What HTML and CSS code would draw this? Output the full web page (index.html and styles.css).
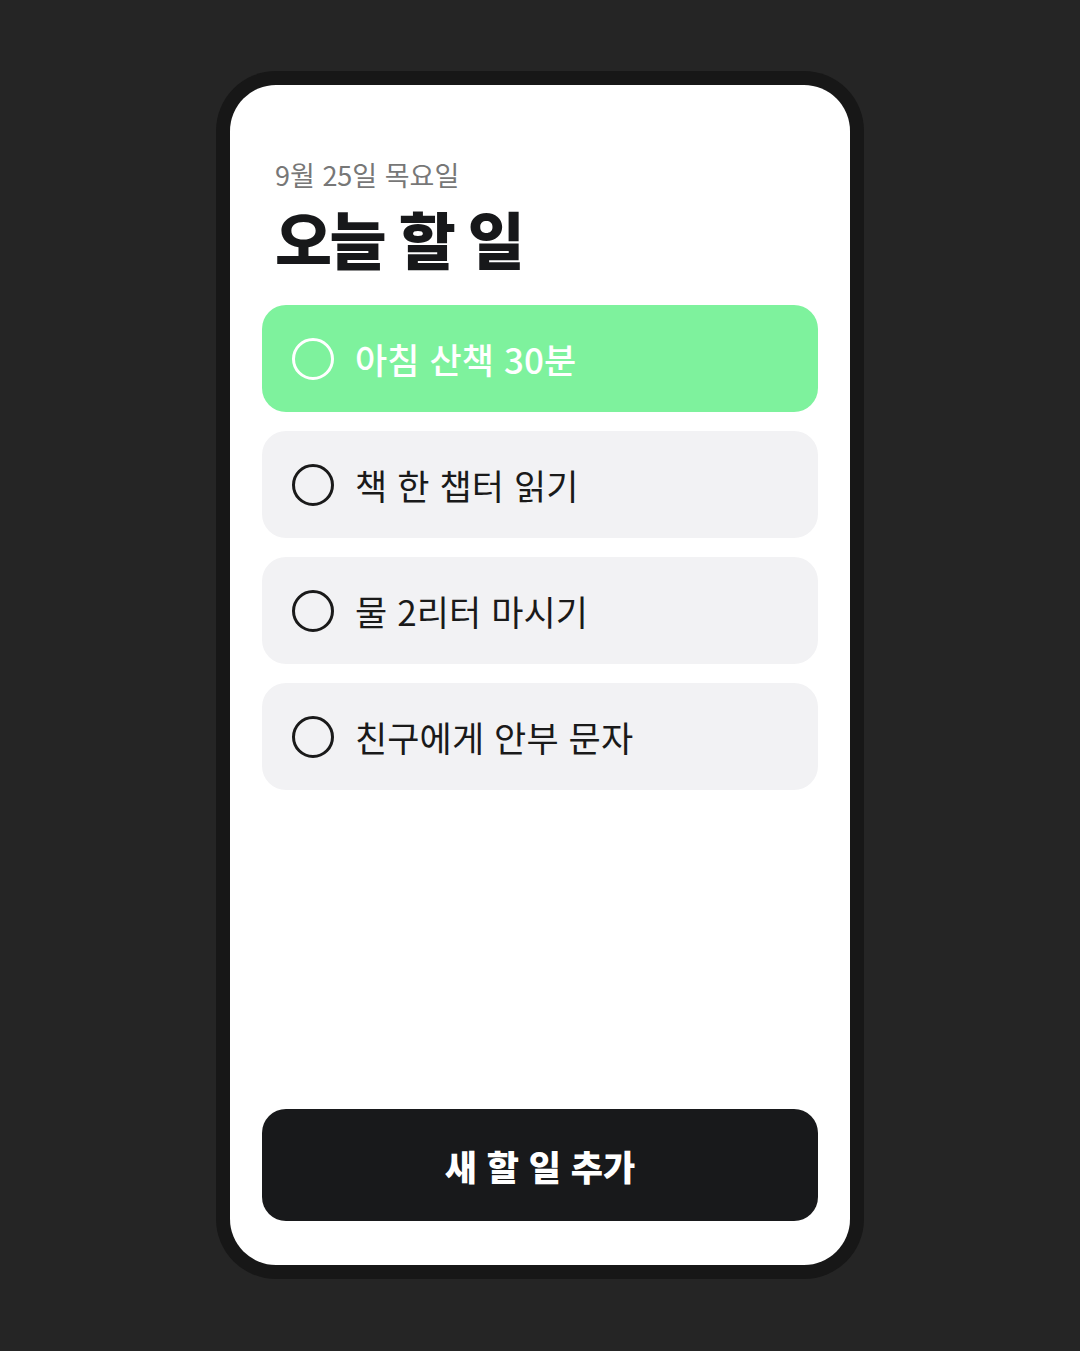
FILE: index.html
```html
<!DOCTYPE html>
<html lang="ko">
<head>
<meta charset="utf-8">
<link rel="stylesheet" href="styles.css">
</head>
<body>
<div class="stage">
  <div class="phone">
    <div class="screen">
      <div class="header">
        <div class="date">9월 25일 목요일</div>
        <h1 class="title">오늘 할 일</h1>
      </div>
      <ul class="tasks">
        <li class="task task-active"><span class="check"></span><span class="label">아침 산책 30분</span></li>
        <li class="task"><span class="check"></span><span class="label">책 한 챕터 읽기</span></li>
        <li class="task"><span class="check"></span><span class="label">물 2리터 마시기</span></li>
        <li class="task"><span class="check"></span><span class="label">친구에게 안부 문자</span></li>
      </ul>
      <div class="spacer"></div>
      <button class="add-btn">새 할 일 추가</button>
    </div>
  </div>
</div>
</body>
</html>
```
FILE: styles.css
```css
* { box-sizing: border-box; }
html, body {
  margin: 0;
  padding: 0;
  background: #252525;
  font-family: "Noto Sans CJK KR", "Noto Sans", sans-serif;
}
.stage {
  width: 1080px;
  height: 1351px;
  display: flex;
  justify-content: center;
  padding-top: 71px;
}
.phone {
  width: 648px;
  height: 1208px;
  background: #171717;
  border-radius: 60px;
  padding: 14px;
}
.screen {
  width: 100%;
  height: 100%;
  background: #ffffff;
  border-radius: 46px;
  padding: 72px 32px 44px;
  display: flex;
  flex-direction: column;
}
.header {
  padding-left: 13px;
}
.date {
  font-size: 27px;
  line-height: 36px;
  color: #777777;
  letter-spacing: 0;
}
.title {
  margin: 7px 0 0;
  font-size: 62px;
  line-height: 76px;
  font-weight: 900;
  color: #17181a;
  letter-spacing: -2.6px;
}
.tasks {
  list-style: none;
  margin: 29px 0 0;
  padding: 0;
  display: flex;
  flex-direction: column;
  gap: 19px;
}
.task {
  height: 107px;
  border-radius: 24px;
  background: #f2f2f4;
  display: flex;
  align-items: center;
  padding-left: 30px;
  gap: 21px;
  color: #1a1a1a;
}
.task-active {
  background: #7ef29d;
  color: #ffffff;
}
.check {
  width: 42px;
  height: 42px;
  border: 3px solid currentColor;
  border-radius: 50%;
  flex: none;
}
.label {
  font-size: 35px;
  font-weight: 400;
  letter-spacing: 0.1px;
  line-height: 1;
}
.task-active .label {
  font-weight: 500;
}
.spacer { flex: 1; }
.add-btn {
  height: 112px;
  border: none;
  border-radius: 24px;
  background: #18191b;
  color: #ffffff;
  font-family: "Noto Sans CJK KR", "Noto Sans", sans-serif;
  font-size: 35px;
  font-weight: 900;
  letter-spacing: 0;
}
```
